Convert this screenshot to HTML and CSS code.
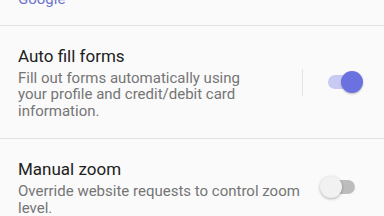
FILE: index.html
```html
<!DOCTYPE html>
<html>
<head>
<meta charset="utf-8">
<link rel="stylesheet" href="styles.css">
</head>
<body>
<div class="prev">
  <div class="link">Google</div>
</div>
<div class="row">
  <div class="text first">
    <div class="title">Auto fill forms</div>
    <div class="desc">Fill out forms automatically using your profile and credit/debit card information.</div>
  </div>
  <div class="vdiv"></div>
  <div class="switch on"><div class="track"></div><div class="thumb"></div></div>
</div>
<div class="row">
  <div class="text">
    <div class="title">Manual zoom</div>
    <div class="desc">Override website requests to control zoom level.</div>
  </div>
  <div class="switch off"><div class="track"></div><div class="thumb"></div></div>
</div>
</body>
</html>
```
FILE: styles.css
```css
html, body {
  margin: 0;
  padding: 0;
  background: #fafafa;
  font-family: Roboto, "Noto Sans", sans-serif;
  overflow: hidden;
}
.prev {
  margin-top: -9px;
  padding: 0 18px 18px;
  border-bottom: 1px solid #e2e2e2;
}
.link {
  font-size: 15px;
  line-height: 16px;
  color: #6f74cc;
}
.row {
  display: flex;
  align-items: center;
  padding: 19px 21px 19px 18px;
  border-bottom: 1px solid #e2e2e2;
}
.text {
  flex: 1;
  min-width: 0;
  margin-right: 14px;
}
.text.first {
  margin-right: 44px;
}
.title {
  font-size: 17px;
  line-height: 22px;
  color: #212121;
  margin-bottom: 3px;
}
.desc {
  font-size: 15px;
  line-height: 16.4px;
  color: #757575;
}
.vdiv {
  width: 1px;
  height: 27px;
  background: #e4e4e4;
  margin-right: 17px;
}
.switch {
  position: relative;
  width: 43px;
  height: 22px;
  flex: none;
}
.track {
  position: absolute;
  left: 8px;
  right: 8px;
  top: 4px;
  height: 14px;
  border-radius: 7px;
}
.thumb {
  position: absolute;
  top: 0;
  width: 22px;
  height: 22px;
  border-radius: 50%;
}
.on .track { background: #c8caf3; }
.on .thumb {
  right: 0;
  background: #6c71e0;
  box-shadow: 0 1px 2px rgba(0,0,0,0.25);
}
.off .track { background: #bdbdbd; }
.off .thumb {
  left: 0;
  background: #f1f1f1;
  box-shadow: 0 1px 3px rgba(0,0,0,0.3);
}
```
